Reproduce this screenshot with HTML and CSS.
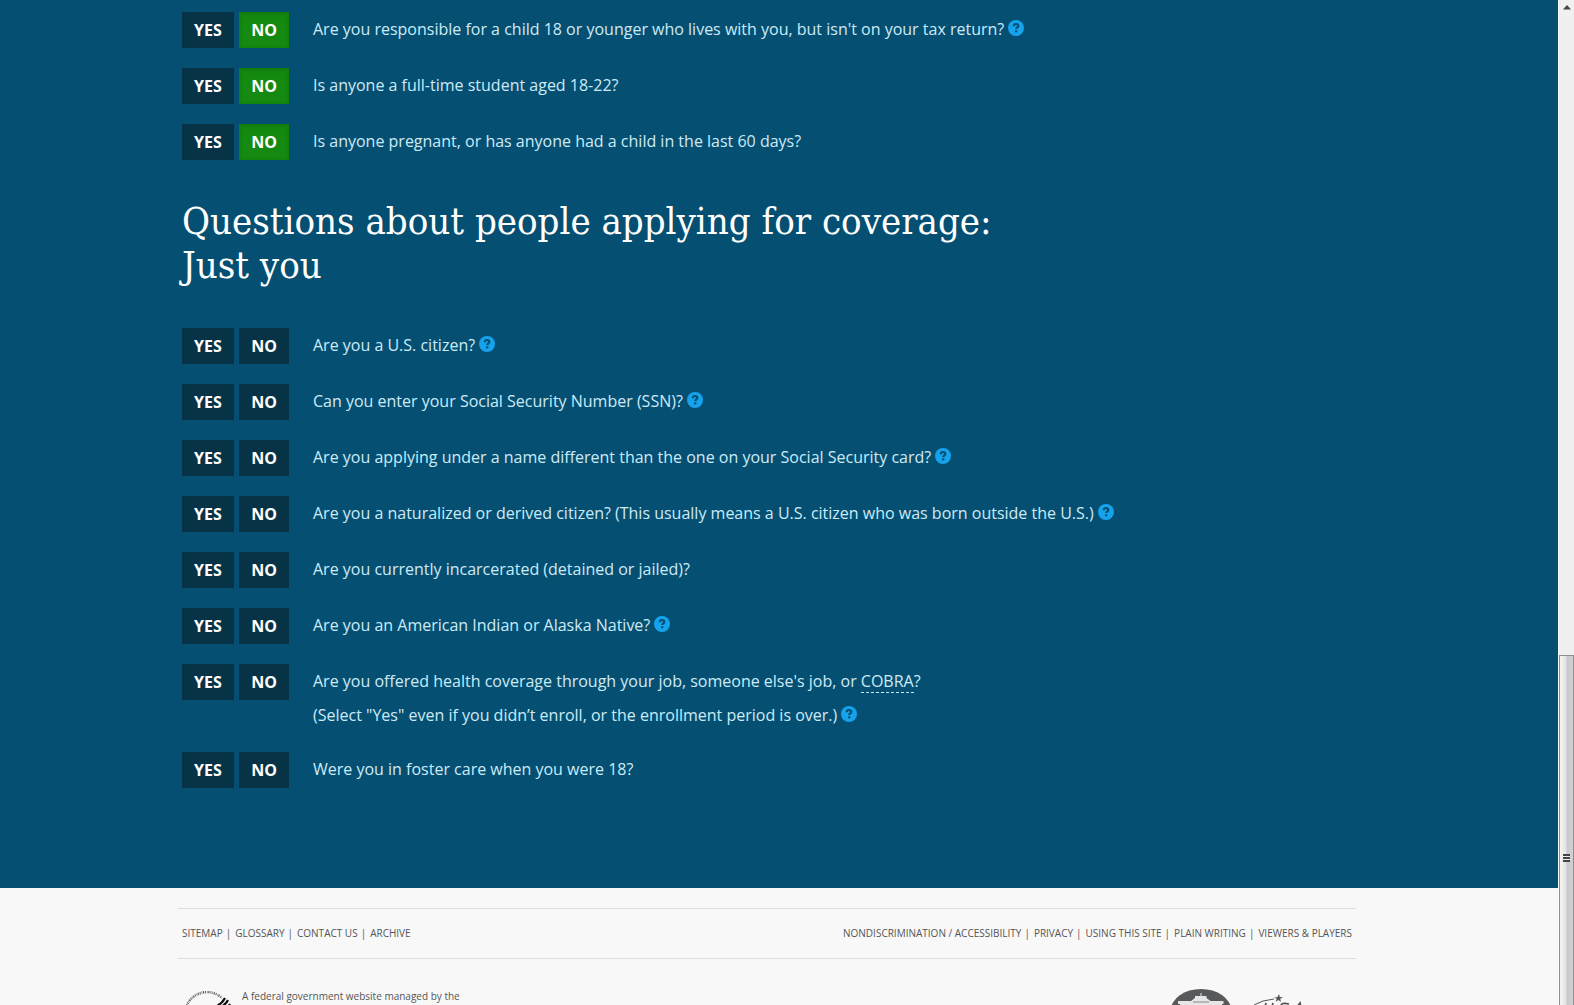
FILE: index.html
```html
<!DOCTYPE html>
<html lang="en">
<head>
<meta charset="utf-8">
<title>Coverage questions</title>
<link rel="stylesheet" href="styles.css">
</head>
<body>
<svg class="sprites">
  <symbol id="help" viewBox="0 0 16 16">
    <circle cx="8" cy="8" r="8" fill="#14a3ec"/>
    <path d="M5.700 6.200C5.800 4.700 6.700 4 8 4c1.400 0 2.300.8 2.300 1.900 0 1.600-2.100 1.500-2.100 3.200" fill="none" stroke="#055072" stroke-width="2.200"/>
    <rect x="7" y="10.300" width="2.300" height="2" fill="#055072"/>
  </symbol>
</svg>
<div class="window">
  <div class="page">
    <main class="main">
      <div class="container">
        <div class="questions">
          <div class="question"><div class="answers"><button type="button" class="answer yes">YES</button><button type="button" class="answer no selected" aria-pressed="true">NO</button></div><p>Are you responsible for a child 18 or younger who lives with you, but isn't on your tax return? <button type="button" class="help" aria-label="Help"><svg><use href="#help"/></svg></button></p></div>
          <div class="question"><div class="answers"><button type="button" class="answer yes">YES</button><button type="button" class="answer no selected" aria-pressed="true">NO</button></div><p>Is anyone a full-time student aged 18-22?</p></div>
          <div class="question"><div class="answers"><button type="button" class="answer yes">YES</button><button type="button" class="answer no selected" aria-pressed="true">NO</button></div><p>Is anyone pregnant, or has anyone had a child in the last 60 days?</p></div>
        </div>
        <h2 class="heading">Questions about people applying for coverage:<br>Just you</h2>
        <div class="questions">
          <div class="question"><div class="answers"><button type="button" class="answer yes">YES</button><button type="button" class="answer no">NO</button></div><p>Are you a U.S. citizen? <button type="button" class="help" aria-label="Help"><svg><use href="#help"/></svg></button></p></div>
          <div class="question"><div class="answers"><button type="button" class="answer yes">YES</button><button type="button" class="answer no">NO</button></div><p>Can you enter your Social Security Number (SSN)? <button type="button" class="help" aria-label="Help"><svg><use href="#help"/></svg></button></p></div>
          <div class="question"><div class="answers"><button type="button" class="answer yes">YES</button><button type="button" class="answer no">NO</button></div><p>Are you applying under a name different than the one on your Social Security card? <button type="button" class="help" aria-label="Help"><svg><use href="#help"/></svg></button></p></div>
          <div class="question"><div class="answers"><button type="button" class="answer yes">YES</button><button type="button" class="answer no">NO</button></div><p>Are you a naturalized or derived citizen? (This usually means a U.S. citizen who was born outside the U.S.) <button type="button" class="help" aria-label="Help"><svg><use href="#help"/></svg></button></p></div>
          <div class="question"><div class="answers"><button type="button" class="answer yes">YES</button><button type="button" class="answer no">NO</button></div><p>Are you currently incarcerated (detained or jailed)?</p></div>
          <div class="question"><div class="answers"><button type="button" class="answer yes">YES</button><button type="button" class="answer no">NO</button></div><p>Are you an American Indian or Alaska Native? <button type="button" class="help" aria-label="Help"><svg><use href="#help"/></svg></button></p></div>
          <div class="question"><div class="answers"><button type="button" class="answer yes">YES</button><button type="button" class="answer no">NO</button></div><p>Are you offered health coverage through your job, someone else's job, or <a class="term" href="#cobra">COBRA</a>?<br>(Select "Yes" even if you didn’t enroll, or the enrollment period is over.) <button type="button" class="help" aria-label="Help"><svg><use href="#help"/></svg></button></p></div>
          <div class="question"><div class="answers"><button type="button" class="answer yes">YES</button><button type="button" class="answer no">NO</button></div><p>Were you in foster care when you were 18?</p></div>
        </div>
      </div>
    </main>
    <footer class="footer">
      <div class="footer-inner">
        <nav class="links" aria-label="Footer">
          <ul><li><a href="#sitemap">SITEMAP</a></li><li><a href="#glossary">GLOSSARY</a></li><li><a href="#contact">CONTACT US</a></li><li><a href="#archive">ARCHIVE</a></li></ul>
          <ul><li><a href="#accessibility">NONDISCRIMINATION / ACCESSIBILITY</a></li><li><a href="#privacy">PRIVACY</a></li><li><a href="#using">USING THIS SITE</a></li><li><a href="#plain">PLAIN WRITING</a></li><li><a href="#viewers">VIEWERS &amp; PLAYERS</a></li></ul>
        </nav>
        <div class="credits">
          <svg class="seal" viewBox="0 0 50 50" aria-hidden="true">
            <path d="M3 25a22 22 0 0 1 37-16" fill="none" stroke="#666" stroke-width="2.400" stroke-dasharray="1 .9 .6 .7 1.300 .9"/>
            <path d="M33 18Q40 15 43 9M35 20Q43 17 46 11M37 23Q45 20 48 15" fill="none" stroke="#111" stroke-width="2.200"/>
          </svg>
          <p>A federal government website managed by the</p>
          <div class="logos">
            <svg class="whitehouse" viewBox="0 0 60 42" aria-hidden="true">
              <ellipse cx="30" cy="21" rx="30" ry="21" fill="#58595b"/>
              <path d="M29.500 4h1v3h5v2l4 3h13v3H7v-3h13l4-3V7h5.500zM9 15h42v14H9z" fill="#e6e6e6"/>
              <path d="M22 13h16M22 17v10M26 17v10M30 17v10M34 17v10M38 17v10M13 17v10M17 17v10M43 17v10M47 17v10" stroke="#888" stroke-width="1"/>
            </svg>
            <svg class="usagov" viewBox="0 0 60 40" aria-hidden="true">
              <path d="M1 16Q9 11 21 10" fill="none" stroke="#555" stroke-width="1"/>
              <path d="M26 5l.8 3 3.200.2-2.800 1.600.8 3.200-2.500-2-2.800 1.800 1-3L21 8.400l3.300-.2z" fill="#555"/>
              <path d="M13 14l-3 12h7l3-12M36 15q-8-2-8 2t5 4-4 5M38 26l9-12 3 12" fill="none" stroke="#555" stroke-width="1.800"/>
            </svg>
          </div>
        </div>
      </div>
    </footer>
  </div>
  <div class="scrollbar" aria-hidden="true">
    <svg class="arrow" viewBox="0 0 8 5"><path d="M4 0l4 4.500H0z" fill="#444"/></svg>
    <div class="thumb"><span class="grip"></span></div>
  </div>
</div>
</body>
</html>
```
FILE: styles.css
```css
* { box-sizing: border-box; }
body { margin: 0; font-family: "Open Sans", sans-serif; }
p, ul, h2 { margin: 0; padding: 0; }
button { border: 0; padding: 0; font-family: inherit; cursor: pointer; }
.sprites { display: none; }

.window { display: flex; height: 100vh; overflow: hidden; }
.page { flex: 1; min-width: 0; overflow: hidden; background: #f8f8f8; }

.main { padding: 12px 0 100px; background: #055072; }
.container, .footer-inner { max-width: 1202px; margin: 0 auto; }
.container { padding: 0 4px; }

.questions { display: flex; flex-direction: column; gap: 20px; }
.question { display: flex; align-items: flex-start; gap: 24px; color: #cdeaf7; font-size: 16px; line-height: 34px; }
.answers { display: flex; flex: none; gap: 5px; }
.answer { height: 36px; background: #073347; color: #fff; font-size: 16px; font-weight: 700; line-height: 36px; }
.yes { width: 52px; }
.no { width: 50px; }
.selected { background: #148a10; box-shadow: inset 0 1px 5px #117510; }
.help { width: 16px; height: 16px; background: none; line-height: 0; vertical-align: -1px; }
.help svg { width: 16px; height: 16px; }
.term { border-bottom: 1px dashed #cdeaf7; color: inherit; text-decoration: none; }

.heading { padding: 39px 0 41px; color: #fff; font-family: "DejaVu Serif Condensed", "DejaVu Serif", serif; font-stretch: condensed; font-size: 38px; font-weight: 400; line-height: 44px; }

.footer { padding-top: 20px; color: #555; }
.footer-inner { padding-right: 24px; }
.links { display: flex; justify-content: space-between; padding: 17px 4px; border: solid #dfdfdf; border-width: 1px 0; font-size: 10px; line-height: 15px; }
.links ul { display: flex; list-style: none; }
.links li + li::before { content: "|"; padding: 0 4px 0 3px; }
.links a { color: inherit; text-decoration: none; }
.credits { display: flex; gap: 10px; padding: 30px 4px; font-size: 10px; line-height: 15px; }
.seal { width: 50px; height: 50px; }
.logos { display: flex; gap: 22px; margin-left: auto; padding-right: 39px; }
.whitehouse { width: 60px; height: 42px; }
.usagov { width: 60px; height: 40px; }

.scrollbar { display: flex; flex: none; flex-direction: column; align-items: center; justify-content: space-between; width: 16px; padding-top: 5px; background: #f0f0f0; border-left: 1px solid #fff; }
.arrow { width: 8px; height: 5px; }
.thumb { display: flex; align-items: center; justify-content: center; width: 100%; height: 35%; padding-top: 54px; border: 1px solid #8e8e92; border-bottom: 0; background: linear-gradient(90deg, #f5f5f5, #e3e3e5 45%, #c8c8cd 55%, #d0d0d4); }
.grip { width: 7px; height: 8px; background: repeating-linear-gradient(#444 0 2px, #eee 2px 3px); }
```
